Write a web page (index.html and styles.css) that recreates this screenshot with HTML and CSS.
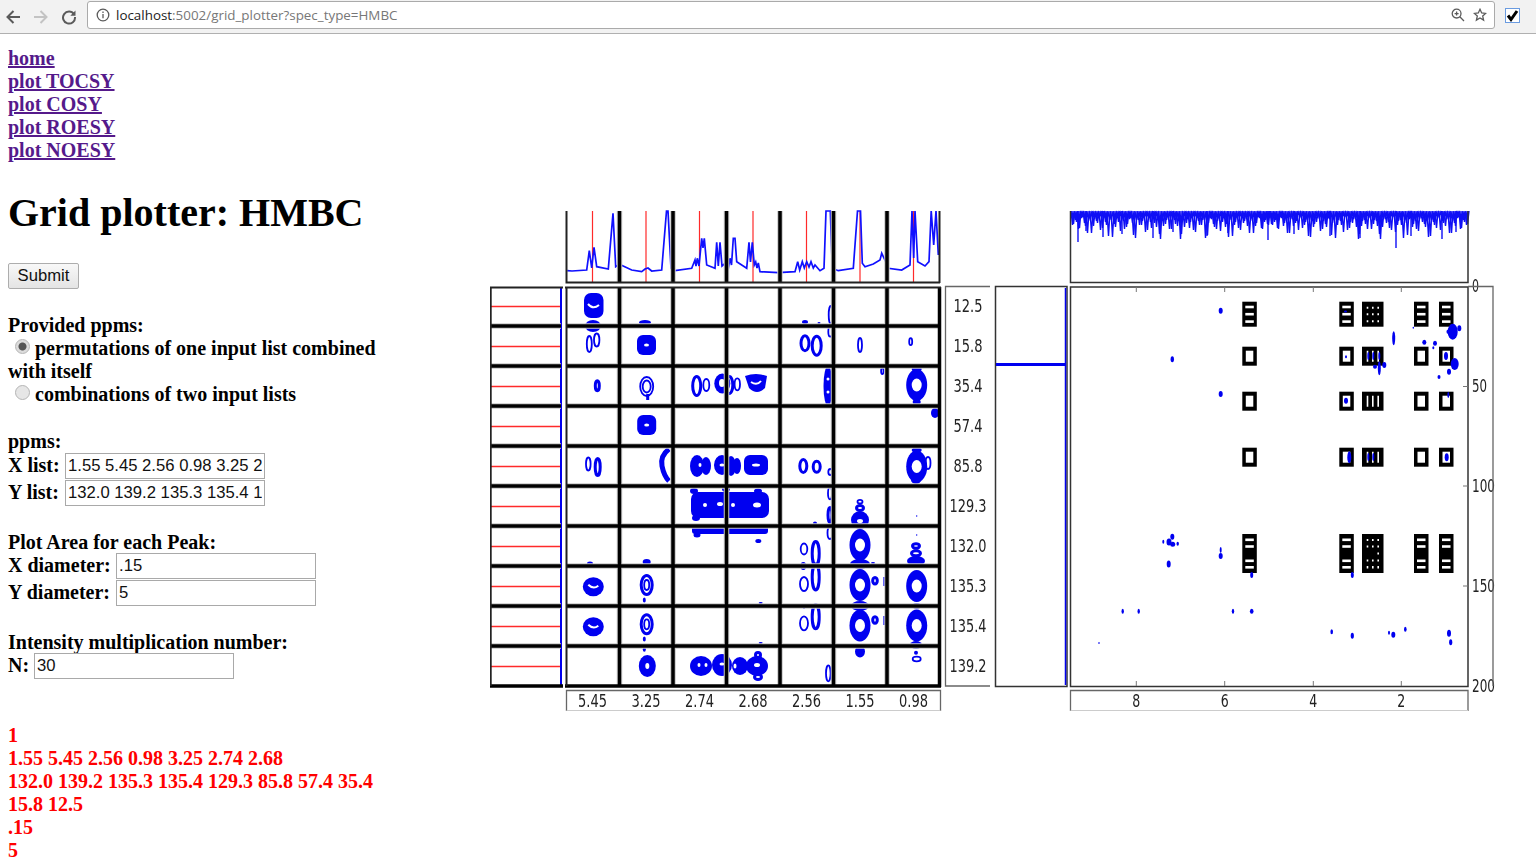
FILE: index.html
```html
<!DOCTYPE html>
<html>
<head>
    <title>Grid plotter: HMBC</title>
    <meta charset="utf-8">
    <link rel="stylesheet" href="styles.css">
</head>
<body>
    <header class="toolbar">
        <svg class="tool-icon" viewBox="0 0 16 16"><path class="icon-line" d="M15 8H2.500M8.500 2 2.500 8l6 6"/></svg>
        <svg class="tool-icon tool-off" viewBox="0 0 16 16"><path class="icon-line" d="M1 8h12.500M7.500 2l6 6-6 6"/></svg>
        <svg class="tool-icon" viewBox="0 0 16 16"><path class="icon-line" d="M13 5.200A6 6 0 1 0 14 8"/><path class="icon-fill" d="M14.500 1.500v5.200H9.300z"/></svg>
        <div class="address">
            <svg class="addr-icon" viewBox="0 0 14 14"><circle class="icon-thin" cx="7" cy="7" r="5.800"/><path class="icon-thin" d="M7 6v4.200M7 3.600v1.300"/></svg>
            <span class="url"><span class="url-host">localhost</span>:5002/grid_plotter?spec_type=HMBC</span>
            <svg class="addr-icon addr-zoom" viewBox="0 0 14 14"><circle class="icon-thin" cx="5.600" cy="5.600" r="4.400"/><path class="icon-thin" d="M3.600 5.600h4M5.600 3.600v4M8.800 8.800l4.200 4.200"/></svg>
            <svg class="addr-icon addr-star" viewBox="0 0 14 14"><path class="icon-thin" d="M7 1.300 8.700 5l4 .4-3 2.700.9 4L7 10l-3.600 2.100.9-4-3-2.700 4-.4z"/></svg>
        </div>
        <div class="ext-check"><svg viewBox="0 0 13 13"><path d="M2 6.500 5 10.500 11 2"/></svg></div>
    </header>

    <main class="page">
        <section class="controls">
            <nav class="links">
                <a href="#">home</a><br>
                <a href="#">plot TOCSY</a><br>
                <a href="#">plot COSY</a><br>
                <a href="#">plot ROESY</a><br>
                <a href="#">plot NOESY</a>
            </nav>
            <h1>Grid plotter: HMBC</h1>
            <form>
                <button type="button" class="submit">Submit</button>

                <div class="group group-first">
                    Provided ppms:<br>
                    <input type="radio" name="mode" checked>permutations of one input list combined with itself<br>
                    <input type="radio" name="mode">combinations of two input lists
                </div>

                <div class="group group-ppms">
                    ppms:
                    <div class="row"><label class="label-short">X list:</label><input type="text" value="1.55 5.45 2.56 0.98 3.25 2.74 2.68"></div>
                    <div class="row"><label class="label-short">Y list:</label><input type="text" value="132.0 139.2 135.3 135.4 129.3 85.8 57.4 35.4 15.8 12.5"></div>
                </div>

                <div class="group group-area">
                    Plot Area for each Peak:
                    <div class="row"><label class="label-long">X diameter:</label><input type="text" value=".15"></div>
                    <div class="row"><label class="label-long">Y diameter:</label><input type="text" value="5"></div>
                </div>

                <div class="group group-area">
                    Intensity multiplication number:
                    <div class="row"><label>N:</label><input type="text" value="30"></div>
                </div>
            </form>

            <div class="echo">
                1<br>
                1.55 5.45 2.56 0.98 3.25 2.74 2.68<br>
                132.0 139.2 135.3 135.4 129.3 85.8 57.4 35.4 15.8 12.5<br>
                .15<br>
                5
            </div>
        </section>

        <figure class="plot">
            <svg viewBox="490 205 1046 510" width="1046" height="510">
                <defs>
                    <path id="noise" d="M0 1l1.500 14 1.500-14 1.500 9 1.500-9 1.500 18 1.500-18 1.500 7 1.500-7 1.500 12 1.500-12 1.500 22 1.500-22 1.500 8 1.500-8 1.500 15 1.500-15 1.500 10 1.500-10 1.500 6 1.500-6 1.500 17 1.500-17 1.500 11 1.500-11 1.500 25 1.500-25 1.500 9 1.500-9 1.500 13 1.500-13 1.500 7 1.500-7 1.500 20 1.500-20 1.500 10 1.500-10 1.500 16 1.500-16 1.500 8 1.500-8 1.500 12 1.500-12 1.500 27 1.500-27 1.500 9 1.500-9 1.500 14 1.500-14 1.500 6 1.500-6 1.500 19 1.500-19 1.500 11 1.500-11 1.500 8 1.500-8 1.500 16 1.500-16 1.500 23 1.500-23 1.500 10 1.500-10 1.500 13 1.500-13 1.500 7 1.500-7 1.500 18 1.500-18 1.500 9 1.500-9 1.500 15 1.500-15 1.500 28 1.500-28 1.500 8 1.500-8 1.500 12 1.500-12 1.500 17 1.500-17 1.500 6 1.500-6 1.500 21 1.500-21 1.500 10 1.500-10 1.500 14 1.500-14 1.500 9 1.500-9 1.500 24 1.500-24 1.500 7 1.500-7 1.500 13 1.500-13 1.500 18 1.500-18 1.500 8 1.500-8 1.500 11 1.500-11 1.500 16 1.500-16 1.500 26 1.500-26 1.500 9 1.500-9 1.500 14 1.500-14 1.500 7 1.500-7 1.500 19 1.500-19 1.500 12 1.500-12 1.500 8 1.500-8 1.500 22 1.500-22 1.500 10 1.500-10 1.500 15 1.500-15 1.500 6 1.500-6 1.500 17 1.500-17 1.500 11 1.500-11 1.500 13 1.500-13"/>
                    <g id="peak">
                        <ellipse class="solid" rx="10.500" ry="16"/>
                        <ellipse class="hole" rx="5" ry="6.500"/>
                    </g>
                    <g id="blob">
                        <rect class="solid" x="-9.500" y="-10" width="19" height="20" rx="6"/>
                        <ellipse class="hole" rx="2.500" ry="1.600"/>
                    </g>
                    <g id="squiggle">
                        <ellipse class="solid" rx="10.500" ry="9.500"/>
                        <path class="squig" d="M-5-2Q0 3 5-1"/>
                    </g>
                    <g id="n1">
                        <rect class="ink" width="14.500" height="25"/>
                        <rect class="hole" x="3" y="4" width="8.500" height="2.600"/>
                        <rect class="hole" x="3" y="11.200" width="8.500" height="2.600"/>
                        <rect class="hole" x="3" y="18.600" width="8.500" height="2.600"/>
                    </g>
                    <g id="n2">
                        <rect class="ink" width="14.500" height="19"/>
                        <rect class="hole" x="3.500" y="4" width="7.500" height="11"/>
                    </g>
                    <g id="n5">
                        <rect class="ink" width="14.500" height="39"/>
                        <rect class="hole" x="3" y="4.500" width="8.500" height="2.600"/>
                        <rect class="hole" x="3" y="11.200" width="8.500" height="2.600"/>
                        <rect class="hole" x="3" y="25.500" width="8.500" height="2.600"/>
                        <rect class="hole" x="3" y="32" width="8.500" height="2.600"/>
                    </g>
                    <g id="w1">
                        <rect class="ink" width="21.500" height="25"/>
                        <path class="dots" d="M5.500 5v2M5.500 11.500v2M5.500 18.500v2M10.800 5v2M10.800 11.500v2M10.800 18.500v2M16.200 5v2M16.200 11.500v2M16.200 18.500v2"/>
                    </g>
                    <g id="w2">
                        <rect class="ink" width="21.500" height="19"/>
                        <path class="dots" d="M5.500 4v11M10.800 4v11M16.200 4v11"/>
                    </g>
                    <g id="w5">
                        <rect class="ink" width="21.500" height="39"/>
                        <path class="dots" d="M5.500 5v2M5.500 11.500v2M5.500 25.500v2M5.500 32v2.400M10.800 5v2M10.800 11.500v2M10.800 25.500v2M10.800 32v2.400M16.200 5v2M16.200 11.500v2M16.200 18.500v2M16.200 25.500v2M16.200 32v2.400"/>
                    </g>
                </defs>

                <!-- top trace, grid of peaks -->
                <g class="marks">
                    <path d="M592.500 211V282M646 211V282M699.500 211V282M753 211V282M806.500 211V282M860 211V282M913.500 211V282"/>
                </g>
                <polyline class="trace" points="567.300,270.700 572,271 586.700,270 589.300,250.700 591.700,268 594,247.300 596.700,266.700 608.300,269 613,213.300 615.700,266.700 619.300,264.300 631.700,270 641.700,271.700 645,269 648,268 651.700,271 661.700,270 666.500,211 668,211 671,268.300 675,270.700 691.700,268.300 695,260 696,266 697.300,258.300 699,266 701.700,238.300 703,248 704.300,238.300 706.700,265 715,268.300 716.700,242.300 718.300,266 720,242.300 722,266 725.500,263 728.300,268.300 730,258.300 731.500,265 733.300,238.300 735,238.300 736.700,261.700 746.700,268.300 749,242.300 750.500,262 752.300,242.300 754.300,265 755.700,262 757,268 758.300,263 760,271.700 778.300,272.700 795,271.700 797.700,261.700 799.700,270 802.300,261.700 804.300,268 806.700,261.700 809,267 811,261.700 813.300,268 815,265 820,270.700 824,268.300 826,211 830.300,211 832.300,268.300 838.300,270.700 853.300,268.300 857.500,211 860.500,211 862.300,263.300 865,266.700 873.300,264 880,260 881.700,253.300 885,260 888.300,268.300 901.700,270 910,265 912,211 913.700,258 915,211 917.700,261.700 925,266 929,261.700 931.200,211 933.700,245 936,211 938.300,255"/>

                <!-- left projection -->
                <g class="marks side">
                    <path d="M491 306.500H560M491 346.500H560M491 386.500H560M491 426.500H560M491 466.500H560M491 506.500H560M491 546.500H560M491 586.500H560M491 626.500H560M491 666.500H560"/>
                </g>
                <path class="axis-blue" d="M561 288V685"/>

                <!-- peaks, row by row -->
                <g>
                    <rect class="solid" x="584" y="293" width="19.500" height="25" rx="7"/>
                    <path class="squig" d="M588 304Q593 310 599 305"/>
                    <ellipse class="solid" cx="593" cy="326" rx="8" ry="6"/>
                    <ellipse class="ring" cx="589.300" cy="344" rx="2.500" ry="8"/>
                    <ellipse class="ring" cx="596.700" cy="340" rx="2.700" ry="6.500"/>
                    <ellipse class="solid" cx="645" cy="322.500" rx="6" ry="2.500"/>
                    <use href="#blob" x="646.500" y="345"/>
                    <ellipse class="ring heavy" cx="597.300" cy="385.700" rx="2" ry="5"/>
                    <ellipse class="ring" cx="646.700" cy="386.500" rx="6.500" ry="9.500"/>
                    <ellipse class="ring" cx="646.700" cy="386.500" rx="4" ry="6"/>
                    <path class="ring heavy" d="M647.700 394V400"/>
                    <ellipse class="ring heavy" cx="696.700" cy="386" rx="4" ry="9.500"/>
                    <ellipse class="ring" cx="706.300" cy="385" rx="3" ry="6"/>
                    <ellipse class="solid" cx="722.300" cy="383.500" rx="8" ry="10"/>
                    <ellipse class="hole" cx="722" cy="383" rx="3" ry="4"/>
                    <ellipse class="ring heavy" cx="729.300" cy="385" rx="3.500" ry="8.500"/>
                    <ellipse class="ring" cx="737.300" cy="384.300" rx="2.700" ry="6"/>
                    <path class="solid" d="M745 376Q756 372 767 376L765 388Q757 396 749 388Z"/>
                    <path class="squig" d="M751 382Q757 386 761 381"/>
                    <ellipse class="ring heavy" cx="805" cy="343.300" rx="4" ry="7.500"/>
                    <ellipse class="ring heavy" cx="816.700" cy="345.700" rx="4.500" ry="9.500"/>
                    <ellipse class="hole" cx="816.700" cy="345.700" rx="1.200" ry="3"/>
                    <ellipse class="ring" cx="830.700" cy="315" rx="2" ry="9"/>
                    <ellipse class="ring" cx="830.300" cy="331.700" rx="2" ry="5"/>
                    <ellipse class="solid" cx="805" cy="322" rx="3" ry="2"/>
                    <ellipse class="solid" cx="819" cy="323" rx="1.500" ry="1"/>
                    <ellipse class="ring" cx="860" cy="345" rx="2" ry="7"/>
                    <ellipse class="ring" cx="910.700" cy="341.700" rx="1.500" ry="3.500"/>
                    <ellipse class="ring" cx="882.300" cy="371" rx="1.200" ry="3"/>
                    <ellipse class="solid" cx="828" cy="386" rx="4.500" ry="20"/>
                    <ellipse class="hole" cx="828" cy="379" rx="1.500" ry="1.500"/>
                    <ellipse class="hole" cx="828" cy="392" rx="1.500" ry="1.500"/>
                    <use href="#peak" x="916.700" y="385"/>
                    <ellipse class="solid" cx="916.700" cy="369" rx="5" ry="3.500"/>
                    <ellipse class="solid" cx="916.700" cy="402" rx="4" ry="3"/>
                    <ellipse class="solid" cx="935" cy="413" rx="4" ry="5"/>
                    <use href="#blob" x="646.700" y="425"/>

                    <ellipse class="ring" cx="588.300" cy="464" rx="2.300" ry="6.500"/>
                    <ellipse class="ring heavy" cx="597.700" cy="467" rx="2.500" ry="8.500"/>
                    <path class="arc" d="M669 449Q660 456 662 466 664 476 669 481"/>
                    <ellipse class="solid" cx="697" cy="466" rx="7" ry="11"/>
                    <ellipse class="solid" cx="706" cy="466" rx="5" ry="9"/>
                    <ellipse class="solid" cx="722" cy="465" rx="8" ry="10"/>
                    <ellipse class="solid" cx="731" cy="466" rx="5" ry="10"/>
                    <ellipse class="solid" cx="737" cy="466" rx="4" ry="8"/>
                    <rect class="solid" x="744" y="455" width="24" height="20" rx="6"/>
                    <ellipse class="hole" cx="700" cy="465" rx="1.500" ry="2"/>
                    <ellipse class="hole" cx="722" cy="465" rx="2.500" ry="1.500"/>
                    <ellipse class="hole" cx="756" cy="465" rx="4" ry="1.500"/>
                    <ellipse class="ring heavy" cx="803.300" cy="466" rx="3.500" ry="6.500"/>
                    <ellipse class="ring heavy" cx="816.700" cy="466.700" rx="3.500" ry="5.500"/>
                    <ellipse class="ring" cx="830.300" cy="472" rx="2" ry="3"/>
                    <use href="#peak" x="916.700" y="466.500"/>
                    <ellipse class="ring" cx="928" cy="463" rx="2.500" ry="6"/>
                    <ellipse class="solid" cx="916" cy="480" rx="5" ry="4"/>
                    <ellipse class="solid" cx="916.700" cy="450" rx="5" ry="3"/>

                    <rect class="solid" x="691" y="492" width="78" height="26" rx="7"/>
                    <ellipse class="solid" cx="694" cy="491" rx="4" ry="3"/>
                    <ellipse class="solid" cx="726" cy="489" rx="4" ry="3"/>
                    <ellipse class="solid" cx="758" cy="491" rx="4" ry="2.500"/>
                    <ellipse class="solid" cx="696" cy="518" rx="4" ry="3"/>
                    <ellipse class="hole" cx="705" cy="505" rx="2" ry="2"/>
                    <ellipse class="hole" cx="720" cy="504" rx="3" ry="2"/>
                    <ellipse class="hole" cx="733" cy="505" rx="2" ry="2"/>
                    <ellipse class="hole" cx="757" cy="505" rx="4" ry="2.500"/>
                    <rect class="solid" x="692" y="526" width="76" height="8" rx="3"/>
                    <ellipse class="solid" cx="697" cy="535" rx="3.500" ry="2.500"/>
                    <ellipse class="solid" cx="725" cy="540" rx="1" ry="1.500"/>
                    <ellipse class="solid" cx="758.300" cy="541" rx="3" ry="2"/>
                    <ellipse class="ring" cx="830" cy="493.300" rx="2" ry="6"/>
                    <ellipse class="ring heavy" cx="830" cy="515" rx="2" ry="7.500"/>
                    <ellipse class="ring" cx="830" cy="533" rx="2.500" ry="6"/>
                    <ellipse class="solid" cx="815" cy="523" rx="2" ry="1.500"/>
                    <ellipse class="ring" cx="860" cy="501.700" rx="2.500" ry="1.800"/>
                    <ellipse class="ring heavy" cx="860" cy="508" rx="3.500" ry="2.500"/>
                    <ellipse class="solid" cx="860" cy="520" rx="9" ry="9"/>
                    <ellipse class="hole" cx="860" cy="521" rx="3" ry="2"/>
                    <use href="#peak" x="860" y="545"/>
                    <ellipse class="solid" cx="860" cy="564" rx="10" ry="5"/>
                    <use href="#peak" x="860" y="585"/>
                    <use href="#peak" x="860" y="625.500"/>
                    <ellipse class="solid" cx="860" cy="606" rx="9" ry="5"/>
                    <ellipse class="solid" cx="860" cy="651.500" rx="5" ry="6"/>
                    <ellipse class="ring heavy" cx="875" cy="580.700" rx="2.300" ry="3.300"/>
                    <ellipse class="ring heavy" cx="875" cy="620" rx="2.300" ry="3.300"/>
                    <path class="ring" d="M884.300 577V586M884.300 616V625"/>
                    <ellipse class="solid" cx="916.700" cy="516" rx=".7" ry=".7"/>
                    <ellipse class="solid" cx="916.700" cy="535" rx=".7" ry=".7"/>
                    <ellipse class="ring heavy" cx="916" cy="546" rx="3.500" ry="2.300"/>
                    <ellipse class="ring heavy" cx="916" cy="553.300" rx="4.500" ry="2.500"/>
                    <ellipse class="solid" cx="916" cy="561" rx="9" ry="5"/>
                    <use href="#peak" x="916.700" y="586"/>
                    <use href="#peak" x="916.700" y="625.500"/>
                    <ellipse class="solid" cx="916.700" cy="606" rx="5" ry="3"/>
                    <ellipse class="solid" cx="916" cy="645" rx="6" ry="4"/>
                    <ellipse class="solid" cx="916" cy="652.700" rx="2" ry="2"/>
                    <ellipse class="ring" cx="916.700" cy="659" rx="4" ry="2.300"/>
                    <ellipse class="ring" cx="804" cy="549" rx="3.300" ry="5.500"/>
                    <ellipse class="ring heavy" cx="815.700" cy="553.500" rx="3.500" ry="12"/>
                    <ellipse class="ring" cx="803.300" cy="566" rx="2" ry="3"/>
                    <ellipse class="ring heavy" cx="815.700" cy="577" rx="3.500" ry="13"/>
                    <ellipse class="ring" cx="804" cy="584" rx="4" ry="7"/>
                    <ellipse class="solid" cx="804" cy="608" rx="1" ry="1"/>
                    <ellipse class="ring heavy" cx="815.700" cy="616.700" rx="3.500" ry="12"/>
                    <ellipse class="ring" cx="804" cy="623.300" rx="4" ry="7"/>
                    <ellipse class="ring" cx="828.300" cy="673.300" rx="2.300" ry="8"/>
                    <ellipse class="solid" cx="760.700" cy="603" rx="2" ry="1"/>
                    <ellipse class="solid" cx="760.700" cy="643" rx="2" ry="1"/>
                    <ellipse class="solid" cx="873" cy="563" rx="2" ry="1"/>
                    <ellipse class="solid" cx="590" cy="563.500" rx="3" ry="2"/>
                    <ellipse class="solid" cx="646.700" cy="562" rx="4" ry="3"/>
                    <use href="#squiggle" x="593.300" y="586.700"/>
                    <use href="#squiggle" x="593.300" y="626.700"/>
                    <ellipse class="ring heavy" cx="646.700" cy="585" rx="5.500" ry="9.500"/>
                    <ellipse class="ring" cx="646.700" cy="585" rx="2.500" ry="5"/>
                    <ellipse class="solid" cx="644.300" cy="600" rx="1.500" ry="2.500"/>
                    <ellipse class="ring heavy" cx="646.700" cy="624.300" rx="5.500" ry="9.500"/>
                    <ellipse class="ring" cx="646.700" cy="624.300" rx="2.500" ry="5"/>
                    <ellipse class="solid" cx="644.300" cy="639" rx="1.500" ry="2.500"/>
                    <ellipse class="solid" cx="644.300" cy="649.300" rx="1.500" ry="2.500"/>
                    <ellipse class="solid" cx="647.300" cy="666" rx="8.500" ry="11"/>
                    <ellipse class="hole" cx="647.300" cy="666" rx="2" ry="3"/>
                    <ellipse class="solid" cx="701" cy="666" rx="11" ry="10"/>
                    <ellipse class="solid" cx="722" cy="665" rx="10" ry="11"/>
                    <ellipse class="solid" cx="740" cy="666" rx="8" ry="9"/>
                    <ellipse class="solid" cx="757" cy="666" rx="11" ry="10"/>
                    <ellipse class="hole" cx="699" cy="665" rx="1.500" ry="2"/>
                    <ellipse class="hole" cx="706" cy="665" rx="1.500" ry="2"/>
                    <ellipse class="hole" cx="722" cy="664" rx="2.500" ry="1.500"/>
                    <ellipse class="hole" cx="735" cy="666" rx="1.500" ry="2.500"/>
                    <ellipse class="hole" cx="757" cy="665" rx="3" ry="2"/>
                    <ellipse class="ring heavy" cx="758" cy="655" rx="2.500" ry="2.500"/>
                    <ellipse class="ring heavy" cx="758" cy="677" rx="3.500" ry="2.500"/>
                </g>

                <!-- white margins between the sub plots -->
                <path class="grid-halo" d="M566.500 326H939.500M491 326H561M566.500 366H939.500M491 366H561M566.500 406H939.500M491 406H561M566.500 446H939.500M491 446H561M566.500 486H939.500M491 486H561M566.500 526H939.500M491 526H561M566.500 566H939.500M491 566H561M566.500 606H939.500M491 606H561M566.500 646H939.500M491 646H561M619.500 287V686M673 287V686M726.500 287V686M780 287V686M833.500 287V686M887 287V686M619.500 211V283M673 211V283M726.500 211V283M780 211V283M833.500 211V283M887 211V283"/>
                <path class="grid" d="M566.500 326H939.500M491 326H561M566.500 366H939.500M491 366H561M566.500 406H939.500M491 406H561M566.500 446H939.500M491 446H561M566.500 486H939.500M491 486H561M566.500 526H939.500M491 526H561M566.500 566H939.500M491 566H561M566.500 606H939.500M491 606H561M566.500 646H939.500M491 646H561M619.500 287V686M673 287V686M726.500 287V686M780 287V686M833.500 287V686M887 287V686M619.500 211V283M673 211V283M726.500 211V283M780 211V283M833.500 211V283M887 211V283M565 686H941M490 686H563M939.500 287V687"/>
                <path class="grid-edge" d="M490 287.500H563M490.700 287V686M565 287.500H941M566.500 287V686M566.500 211V282.500H940M939.500 211V283"/>

                <!-- chemical shift boxes -->
                <path class="frame-light" d="M990 286.500H945.500V686H990"/>
                <path class="frame-light" d="M566.500 711V690.500H940.500V711"/>
                <path class="frame-pale" d="M566.500 710.500H940.500"/>
                <g class="tick-text">
                    <text x="968" y="312" textLength="29" lengthAdjust="spacingAndGlyphs">12.5</text>
                    <text x="968" y="352" textLength="29" lengthAdjust="spacingAndGlyphs">15.8</text>
                    <text x="968" y="392" textLength="29" lengthAdjust="spacingAndGlyphs">35.4</text>
                    <text x="968" y="432" textLength="29" lengthAdjust="spacingAndGlyphs">57.4</text>
                    <text x="968" y="472" textLength="29" lengthAdjust="spacingAndGlyphs">85.8</text>
                    <text x="968" y="512" textLength="37" lengthAdjust="spacingAndGlyphs">129.3</text>
                    <text x="968" y="552" textLength="37" lengthAdjust="spacingAndGlyphs">132.0</text>
                    <text x="968" y="592" textLength="37" lengthAdjust="spacingAndGlyphs">135.3</text>
                    <text x="968" y="632" textLength="37" lengthAdjust="spacingAndGlyphs">135.4</text>
                    <text x="968" y="672" textLength="37" lengthAdjust="spacingAndGlyphs">139.2</text>
                    <text x="592.500" y="707" textLength="29" lengthAdjust="spacingAndGlyphs">5.45</text>
                    <text x="646" y="707" textLength="29" lengthAdjust="spacingAndGlyphs">3.25</text>
                    <text x="699.500" y="707" textLength="29" lengthAdjust="spacingAndGlyphs">2.74</text>
                    <text x="753" y="707" textLength="29" lengthAdjust="spacingAndGlyphs">2.68</text>
                    <text x="806.500" y="707" textLength="29" lengthAdjust="spacingAndGlyphs">2.56</text>
                    <text x="860" y="707" textLength="29" lengthAdjust="spacingAndGlyphs">1.55</text>
                    <text x="913.500" y="707" textLength="29" lengthAdjust="spacingAndGlyphs">0.98</text>
                    <text x="1136.300" y="707" textLength="8" lengthAdjust="spacingAndGlyphs">8</text>
                    <text x="1224.700" y="707" textLength="8" lengthAdjust="spacingAndGlyphs">6</text>
                    <text x="1313.300" y="707" textLength="8" lengthAdjust="spacingAndGlyphs">4</text>
                    <text x="1401.300" y="707" textLength="8" lengthAdjust="spacingAndGlyphs">2</text>
                    <text x="1475.500" y="292" textLength="7" lengthAdjust="spacingAndGlyphs">0</text>
                    <text x="1479.500" y="392" textLength="15" lengthAdjust="spacingAndGlyphs">50</text>
                    <text x="1483.500" y="492" textLength="23" lengthAdjust="spacingAndGlyphs">100</text>
                    <text x="1483.500" y="592" textLength="23" lengthAdjust="spacingAndGlyphs">150</text>
                    <text x="1483.500" y="692" textLength="23" lengthAdjust="spacingAndGlyphs">200</text>
                </g>

                <!-- 1D slice -->
                <path class="frame" d="M995.500 286.500H1067V686.500H995.500Z"/>
                <path class="slice" d="M996 364.600H1066"/>
                <path class="axis-blue thin" d="M1065.500 288V685"/>

                <!-- full spectrum -->
                <g class="noise">
                    <use href="#noise" transform="translate(1071 210)"/>
                    <use href="#noise" transform="translate(1270 210) scale(-1 1)"/>
                    <use href="#noise" transform="translate(1271 210)"/>
                    <use href="#noise" transform="translate(1468 210) scale(-1 1)"/>
                    <path d="M1078 211V242M1086 211V231M1103 211V237M1122 211V234M1153 211V238M1173 211V232M1207 211V236M1228 211V233M1268 211V240M1294 211V234M1330 211V236M1360 211V238M1396 211V248M1411 211V236M1442 211V239M1456 211V232"/>
                </g>
                <path class="frame" d="M1070.500 211V282.500H1468V211"/>
                <path class="frame" d="M1070.500 287H1468V686.500H1070.500Z"/>
                <path class="frame-light" d="M1070.500 711V690.500H1468V711"/>
                <path class="frame-pale" d="M1070.500 710.500H1468"/>
                <path class="frame-light" d="M1468 286.500H1493V686"/>
                <path class="tick" d="M1136.300 287V292M1224.700 287V292M1313.300 287V292M1401.300 287V292M1136.300 686V681M1224.700 686V681M1313.300 686V681M1401.300 686V681M1463 386.500H1468M1463 486H1468M1463 586H1468"/>

                <use href="#n1" x="1242.300" y="301.700"/>
                <use href="#n1" x="1339.300" y="301.700"/>
                <use href="#w1" x="1362" y="301.700"/>
                <use href="#n1" x="1414" y="301.700"/>
                <use href="#n1" x="1439" y="301.700"/>
                <use href="#n2" x="1242.300" y="346.700"/>
                <use href="#n2" x="1339.300" y="346.700"/>
                <use href="#w2" x="1362" y="346.700"/>
                <use href="#n2" x="1414" y="346.700"/>
                <use href="#n2" x="1439" y="346.700"/>
                <use href="#n2" x="1242.300" y="391.700"/>
                <use href="#n2" x="1339.300" y="391.700"/>
                <use href="#w2" x="1362" y="391.700"/>
                <use href="#n2" x="1414" y="391.700"/>
                <use href="#n2" x="1439" y="391.700"/>
                <use href="#n2" x="1242.300" y="447.700"/>
                <use href="#n2" x="1339.300" y="447.700"/>
                <use href="#w2" x="1362" y="447.700"/>
                <use href="#n2" x="1414" y="447.700"/>
                <use href="#n2" x="1439" y="447.700"/>
                <use href="#n5" x="1242.300" y="534"/>
                <use href="#n5" x="1339.300" y="534"/>
                <use href="#w5" x="1362" y="534"/>
                <use href="#n5" x="1414" y="534"/>
                <use href="#n5" x="1439" y="534"/>

                <g class="solid">
                    <ellipse cx="1220.700" cy="310.700" rx="2" ry="3"/>
                    <ellipse cx="1172.300" cy="359.300" rx="1.700" ry="3"/>
                    <ellipse cx="1220.700" cy="394" rx="2" ry="3"/>
                    <ellipse cx="1393.700" cy="338.300" rx="1.500" ry="7"/>
                    <ellipse cx="1452.700" cy="331.700" rx="5" ry="8"/>
                    <ellipse cx="1447.700" cy="331.700" rx="1.200" ry="2"/>
                    <ellipse cx="1459.300" cy="328.300" rx="2" ry="3"/>
                    <ellipse cx="1424.300" cy="342.300" rx="2" ry="2.500"/>
                    <ellipse cx="1435" cy="343.300" rx="2" ry="2.500"/>
                    <ellipse cx="1433.300" cy="347.700" rx="1" ry="1.500"/>
                    <ellipse cx="1454.700" cy="364" rx="4" ry="6"/>
                    <ellipse cx="1449" cy="371.700" rx="2" ry="3"/>
                    <ellipse cx="1439" cy="377" rx="1.500" ry="2"/>
                    <ellipse cx="1384.300" cy="365" rx="2" ry="3"/>
                    <ellipse cx="1379.300" cy="368.300" rx="1.500" ry="7"/>
                    <ellipse cx="1375" cy="366.700" rx="2" ry="2"/>
                    <ellipse cx="1413.300" cy="327.700" rx=".7" ry="1"/>
                    <ellipse cx="1446" cy="356" rx="2" ry="4"/>
                    <ellipse cx="1346" cy="356.700" rx="1" ry="1.500"/>
                    <ellipse cx="1346" cy="400.700" rx="2" ry="3"/>
                    <ellipse cx="1448.300" cy="395" rx="1" ry="3"/>
                    <ellipse cx="1368.300" cy="356" rx="1" ry="4"/>
                    <ellipse cx="1373.300" cy="356" rx="1" ry="4"/>
                    <ellipse cx="1379.300" cy="356" rx="1" ry="4"/>
                    <ellipse cx="1349.300" cy="457.300" rx="2" ry="6"/>
                    <ellipse cx="1446.700" cy="457.300" rx="2" ry="4"/>
                    <ellipse cx="1368.300" cy="457" rx="1" ry="4"/>
                    <ellipse cx="1373.300" cy="457" rx="1" ry="4"/>
                    <ellipse cx="1345.500" cy="311.500" rx="1.500" ry="1"/>
                    <ellipse cx="1172.300" cy="536.700" rx="2" ry="3"/>
                    <ellipse cx="1169" cy="542" rx="2.500" ry="3.500"/>
                    <ellipse cx="1172.700" cy="544.300" rx="2.500" ry="2.500"/>
                    <ellipse cx="1163.300" cy="541.700" rx="1" ry="2"/>
                    <ellipse cx="1177.700" cy="543.700" rx="1.200" ry="2"/>
                    <ellipse cx="1168.700" cy="564" rx="2" ry="3.500"/>
                    <ellipse cx="1220.700" cy="550" rx="1" ry="3"/>
                    <ellipse cx="1220.700" cy="556" rx="2" ry="3"/>
                    <ellipse cx="1251.700" cy="575" rx="1.500" ry="3"/>
                    <ellipse cx="1352.300" cy="575" rx="1.500" ry="3"/>
                    <ellipse cx="1122.700" cy="611.300" rx="1.200" ry="2.500"/>
                    <ellipse cx="1138.700" cy="611.300" rx="1.200" ry="2.500"/>
                    <ellipse cx="1233" cy="611.300" rx="1.200" ry="2.500"/>
                    <ellipse cx="1251.700" cy="611.300" rx="1.800" ry="2.500"/>
                    <ellipse cx="1331.700" cy="631.700" rx="1.300" ry="2.500"/>
                    <ellipse cx="1352.300" cy="635.700" rx="1.600" ry="3"/>
                    <ellipse cx="1389" cy="632.700" rx="1" ry="2"/>
                    <ellipse cx="1393.300" cy="634.700" rx="2" ry="3"/>
                    <ellipse cx="1405.300" cy="629.300" rx="1.300" ry="2.500"/>
                    <ellipse cx="1449" cy="633.300" rx="2" ry="3.500"/>
                    <ellipse cx="1450.700" cy="642.300" rx="1.600" ry="3"/>
                    <ellipse cx="1099" cy="643" rx=".7" ry="1"/>
                </g>
            </svg>
        </figure>
    </main>
</body>
</html>
```

FILE: styles.css
```css
html {
    overflow: hidden;
}
body {
    margin: 0;
    font-family: "Liberation Serif", "Times New Roman", serif;
    font-size: 20px;
    font-weight: bold;
    background-color: white;
    color: black;
}

/* browser chrome */
.toolbar {
    display: flex;
    align-items: center;
    height: 33px;
    padding-left: 5px;
    background-color: #f2f2f2;
    border-bottom: 1px solid #b0b0b0;
    font-weight: normal;
}
.tool-icon {
    width: 16px;
    height: 16px;
    margin-right: 12px;
}
.tool-off {
    opacity: 0.3;
}
.icon-line {
    fill: none;
    stroke: #5a5a5a;
    stroke-width: 2;
}
.icon-fill {
    fill: #5a5a5a;
}
.icon-thin {
    fill: none;
    stroke: #5a5a5a;
    stroke-width: 1.3;
}
.address {
    display: flex;
    align-items: center;
    box-sizing: border-box;
    width: 1408px;
    height: 28px;
    margin-left: -2px;
    margin-top: -3px;
    padding: 0 7px 0 8px;
    background: white;
    border: 1px solid #aaa;
    border-radius: 3px;
}
.addr-icon {
    flex: none;
    width: 14px;
    height: 14px;
}
.addr-zoom {
    margin-left: auto;
}
.addr-star {
    margin-left: 8px;
}
.url {
    margin-left: 6px;
    font-family: "Open Sans", Arial, sans-serif;
    font-size: 13.4px;
    color: #777;
}
.url-host {
    color: #222;
}
.ext-check {
    box-sizing: border-box;
    width: 15px;
    height: 15px;
    margin: -3px 0 0 10px;
    background: white;
    border: 1px solid #6a9be0;
}
.ext-check svg {
    display: block;
    fill: none;
    stroke: black;
    stroke-width: 3;
}

/* page */
.page {
    display: flex;
}
.controls {
    flex: none;
    box-sizing: border-box;
    width: 382px;
    padding: 13px 0 0 8px;
}
.links a {
    color: #551a8b;
}
h1 {
    margin: 27px 0 27px;
    font-size: 40px;
}
.submit {
    display: block;
    box-sizing: border-box;
    width: 71px;
    height: 26px;
    padding: 0;
    font-family: "Liberation Sans", Arial, sans-serif;
    font-size: 16.67px;
    color: #111;
    background: linear-gradient(#f8f8f8, #e4e4e4);
    border: 1px solid #adadad;
    border-radius: 2px;
}
.group-first {
    margin-top: 25px;
}
.group-ppms {
    margin-top: 24px;
}
.group-area {
    margin-top: 25px;
}
input[type="radio"] {
    appearance: none;
    box-sizing: border-box;
    width: 15px;
    height: 15px;
    margin: 0 5px 0 7px;
    vertical-align: 1px;
    background: #e6e6e6;
    border: 1px solid #b5b5b5;
    border-radius: 50%;
}
input[type="radio"]:checked {
    background: radial-gradient(circle, #555 0 3.5px, #dcdcdc 4.5px);
}
.row {
    display: flex;
    align-items: center;
    gap: 5px;
    height: 25.5px;
    margin-bottom: 1.5px;
}
.group-area .row:first-of-type {
    margin-top: -0.5px;
}
.label-short {
    width: 52px;
}
.label-long {
    width: 103px;
}
.row input {
    box-sizing: border-box;
    width: 200px;
    height: 25.5px;
    padding: 1px 2px;
    font-family: "Liberation Sans", Arial, sans-serif;
    font-size: 16.67px;
    color: #111;
    border: 1px solid #a9a9a9;
    border-radius: 0;
}
.echo {
    margin-top: 45.5px;
    color: red;
}

/* figure */
.plot {
    flex: none;
    margin: 171px 0 0 108px;
}
.plot svg {
    display: block;
    filter: blur(0.35px);
    font-family: "DejaVu Sans", sans-serif;
    font-weight: normal;
}
.marks path {
    fill: none;
    stroke: #ff2a2a;
    stroke-width: 1.2;
}
.side path {
    stroke-width: 1.7;
}
.trace {
    fill: none;
    stroke: #1010ff;
    stroke-width: 1.7;
}
.axis-blue {
    fill: none;
    stroke: #0000ee;
    stroke-width: 2;
}
.axis-blue.thin {
    stroke-width: 1.5;
}
.solid {
    fill: #0000f0;
}
.hole {
    fill: white;
}
.squig {
    fill: none;
    stroke: white;
    stroke-width: 2;
}
.ring {
    fill: none;
    stroke: #0000f0;
    stroke-width: 1.8;
}
.ring.heavy {
    stroke-width: 3;
}
.arc {
    fill: none;
    stroke: #0000f0;
    stroke-width: 5;
}
.grid {
    fill: none;
    stroke: black;
    stroke-width: 3.5;
}
.grid-halo {
    fill: none;
    stroke: #c8c8c8;
    stroke-width: 5.5;
}
.grid-edge {
    fill: none;
    stroke: #222;
    stroke-width: 2;
}
.frame {
    fill: none;
    stroke: #333;
    stroke-width: 1.5;
}
.frame-light {
    fill: none;
    stroke: #666;
    stroke-width: 1.3;
}
.frame-pale {
    fill: none;
    stroke: #ccc;
    stroke-width: 1;
}
.tick {
    fill: none;
    stroke: #777;
    stroke-width: 1;
}
.tick-text text {
    font-size: 18px;
    fill: #222;
    text-anchor: middle;
}
.slice {
    fill: none;
    stroke: #0000f0;
    stroke-width: 3;
}
.noise path,
.noise use {
    fill: none;
    stroke: #0f0ff5;
    stroke-width: 1.4;
}
.ink {
    fill: black;
}
.dots {
    fill: none;
    stroke: white;
    stroke-width: 1.6;
}
```
